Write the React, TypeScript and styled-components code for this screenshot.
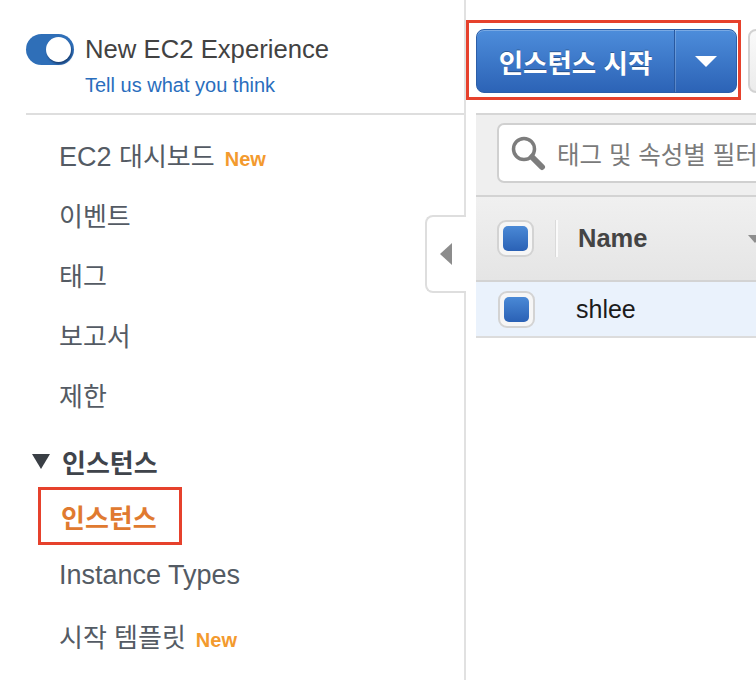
import React from "react";
import styled, { createGlobalStyle } from "styled-components";

const GlobalStyle = createGlobalStyle`
  html, body { margin: 0; padding: 0; background: #fff; }
  body { font-family: "Liberation Sans", "Noto Sans CJK KR", Arial, sans-serif; }
  * { box-sizing: border-box; }
`;

const Page = styled.div`
  display: flex;
  width: 756px;
  height: 680px;
  overflow: hidden;
  background: #fff;
`;

/* ---------- Sidebar ---------- */
const Sidebar = styled.aside`
  position: relative;
  flex: 0 0 466px;
  border-right: 2px solid #e1e1e1;
`;

const ExperienceHeader = styled.div`
  padding: 34px 0 0 26px;
`;

const ToggleRow = styled.div`
  display: flex;
  align-items: center;
  gap: 11px;
  height: 30px;
`;

const Toggle = styled.div`
  display: flex;
  justify-content: flex-end;
  align-items: center;
  width: 48px;
  height: 31px;
  padding: 0 3px;
  border-radius: 16px;
  background: #2f6fb8;
`;

const Knob = styled.div`
  width: 25px;
  height: 25px;
  border-radius: 50%;
  background: #fff;
  box-shadow: 1px 2px 2px rgba(10, 30, 70, 0.55);
`;

const ExperienceTitle = styled.span`
  font-size: 25.7px;
  line-height: 30px;
  color: #424242;
`;

const FeedbackLink = styled.a`
  display: block;
  margin: 9px 0 0 59px;
  font-size: 20px;
  line-height: 24px;
  color: #2a6ebd;
  text-decoration: none;
`;

const Divider = styled.div`
  margin: 16px 0 0 26px;
  border-top: 2px solid #dedede;
`;

const Nav = styled.nav`
  padding-top: 9px;
`;

const NavItem = styled.div<{ $active?: boolean }>`
  display: flex;
  align-items: center;
  height: ${(p) => (p.$active ? "58px" : "60px")};
  font-size: 27px;
  color: ${(p) => (p.$active ? "#e07a30" : "#545b64")};
  font-weight: ${(p) => (p.$active ? 700 : 400)};
  ${(p) =>
    p.$active
      ? `
    width: 144px;
    margin-left: 38px;
    padding-left: 20px;
    border: 3px solid #e6412c;
  `
      : `
    padding-left: 59px;
  `}
`;

const Ko = styled.span`
  font-size: 26px;
`;

const Badge = styled.span`
  margin-left: 10px;
  font-size: 20px;
  font-weight: 700;
  color: #f39a2e;
`;

const GroupHeader = styled.div`
  display: flex;
  align-items: center;
  gap: 12px;
  height: 52px;
  margin-top: 11px;
  padding-left: 32px;
  font-size: 26px;
  font-weight: 700;
  color: #3f444b;
`;

const CollapseTab = styled.button`
  position: absolute;
  top: 215px;
  right: -2px;
  width: 41px;
  height: 78px;
  display: flex;
  align-items: center;
  padding: 0 0 0 13px;
  background: #fff;
  border: 2px solid #dedede;
  border-right: none;
  border-radius: 8px 0 0 8px;
`;

/* ---------- Main ---------- */
const Main = styled.main`
  flex: 1;
  min-width: 0;
  overflow: hidden;
`;

const Toolbar = styled.div`
  display: flex;
  align-items: flex-start;
  padding-top: 20px;
`;

const Highlight = styled.div`
  flex-shrink: 0;
  height: 80px;
  padding: 6px 1px 4px 7px;
  border: 3px solid #e6412c;
`;

const SplitButton = styled.div`
  display: flex;
  width: 261px;
  height: 64px;
  border: 1px solid #2c5ea8;
  border-radius: 8px;
  overflow: hidden;
  background: linear-gradient(#4d8ddb, #2c63b6);
  box-shadow: inset 0 1px 0 rgba(255, 255, 255, 0.25);
`;

const PrimaryPart = styled.div`
  display: flex;
  align-items: center;
  justify-content: center;
  width: 197px;
  color: #fff;
  font-size: 26.5px;
  font-weight: 700;
  text-shadow: 0 -1px 0 rgba(0, 0, 0, 0.3);
`;

const DropdownPart = styled.div`
  flex: 1;
  display: flex;
  align-items: center;
  justify-content: center;
  border-left: 1px solid #28589f;
  box-shadow: inset 1px 0 0 rgba(255, 255, 255, 0.2);
`;

const GhostButton = styled.div`
  flex-shrink: 0;
  width: 80px;
  height: 64px;
  margin: 9px 0 0 7px;
  border: 2px solid #d2d2d2;
  border-radius: 8px;
  background: linear-gradient(#fafafa, #ebebeb);
`;

const FilterBar = styled.div`
  width: 600px;
  margin: 13px 0 0 10px;
  padding: 8px 0 12px 21px;
  background: #efefef;
  border-top: 2px solid #d6d6d6;
  border-bottom: 2px solid #d3d3d3;
`;

const SearchBox = styled.div`
  display: flex;
  align-items: center;
  gap: 11px;
  height: 60px;
  padding-left: 11px;
  background: #fff;
  border: 2px solid #d0d0d0;
  border-radius: 7px;
  font-size: 24.5px;
  color: #7a7a7a;
`;

const TableHeader = styled.div`
  display: flex;
  align-items: center;
  width: 600px;
  height: 85px;
  margin-left: 10px;
  padding-left: 21px;
  background: linear-gradient(#f0f0f0, #e5e5e5);
  border-bottom: 2px solid #d3d3d3;
`;

const TableRow = styled.div`
  display: flex;
  align-items: center;
  width: 600px;
  height: 56px;
  margin-left: 10px;
  padding-left: 22px;
  background: #eaf2fc;
  border-bottom: 2px solid #dcdcdc;
`;

const CheckBox = styled.div`
  flex-shrink: 0;
  display: flex;
  align-items: center;
  justify-content: center;
  width: 37px;
  height: 37px;
  border: 2px solid #d3d3d3;
  border-radius: 9px;
  background: #f6f6f6;
`;

const CheckFill = styled.div`
  width: 25px;
  height: 25px;
  border-radius: 5px;
  background: linear-gradient(#4a89d6, #2a61b5);
`;

const HeaderSeparator = styled.div`
  width: 3px;
  height: 37px;
  margin: 0 20px 0 21px;
  background: #fafafa;
  border-left: 1px solid #dadada;
`;

const HeaderCell = styled.div`
  display: flex;
  align-items: center;
  justify-content: space-between;
  width: 184px;
  font-size: 25.5px;
  font-weight: 700;
  color: #444;
`;

const CellText = styled.span`
  margin-left: 41px;
  font-size: 25px;
  color: #1b1b1b;
`;

export default function App() {
  return (
    <>
      <GlobalStyle />
      <Page>
        <Sidebar>
          <ExperienceHeader>
            <ToggleRow>
              <Toggle>
                <Knob />
              </Toggle>
              <ExperienceTitle>New EC2 Experience</ExperienceTitle>
            </ToggleRow>
            <FeedbackLink href="#">Tell us what you think</FeedbackLink>
          </ExperienceHeader>
          <Divider />
          <Nav>
            <NavItem>
              <span>
                EC2 <Ko>대시보드</Ko>
                <Badge>New</Badge>
              </span>
            </NavItem>
            <NavItem>
              <Ko>이벤트</Ko>
            </NavItem>
            <NavItem>
              <Ko>태그</Ko>
            </NavItem>
            <NavItem>
              <Ko>보고서</Ko>
            </NavItem>
            <NavItem>
              <Ko>제한</Ko>
            </NavItem>
            <GroupHeader>
              <svg width="18" height="15" viewBox="0 0 18 15">
                <path d="M0 0 H18 L9 15 Z" fill="#3a3f45" />
              </svg>
              <span>인스턴스</span>
            </GroupHeader>
            <NavItem $active>
              <Ko>인스턴스</Ko>
            </NavItem>
            <NavItem>Instance Types</NavItem>
            <NavItem>
              <span>
                <Ko>시작 템플릿</Ko>
                <Badge>New</Badge>
              </span>
            </NavItem>
          </Nav>
          <CollapseTab aria-label="collapse">
            <svg width="12" height="22" viewBox="0 0 12 22">
              <path d="M12 0 V22 L0 11 Z" fill="#8c8c8c" />
            </svg>
          </CollapseTab>
        </Sidebar>
        <Main>
          <Toolbar>
            <Highlight>
              <SplitButton>
                <PrimaryPart>인스턴스 시작</PrimaryPart>
                <DropdownPart>
                  <svg width="22" height="11" viewBox="0 0 22 11">
                    <path d="M0 0 H22 L11 11 Z" fill="#fff" />
                  </svg>
                </DropdownPart>
              </SplitButton>
            </Highlight>
            <GhostButton />
          </Toolbar>
          <FilterBar>
            <SearchBox>
              <svg width="36" height="36" viewBox="0 0 36 36">
                <circle cx="14" cy="14" r="10.5" fill="none" stroke="#7d7d7d" strokeWidth="3.5" />
                <path d="M22 22 L32 32" stroke="#7d7d7d" strokeWidth="6" strokeLinecap="round" />
              </svg>
              <span>태그 및 속성별 필터</span>
            </SearchBox>
          </FilterBar>
          <TableHeader>
            <CheckBox>
              <CheckFill />
            </CheckBox>
            <HeaderSeparator />
            <HeaderCell>
              <span>Name</span>
              <svg width="14" height="8" viewBox="0 0 14 8">
                <path d="M0 0 H14 L7 8 Z" fill="#8e8e8e" />
              </svg>
            </HeaderCell>
          </TableHeader>
          <TableRow>
            <CheckBox>
              <CheckFill />
            </CheckBox>
            <CellText>shlee</CellText>
          </TableRow>
        </Main>
      </Page>
    </>
  );
}
